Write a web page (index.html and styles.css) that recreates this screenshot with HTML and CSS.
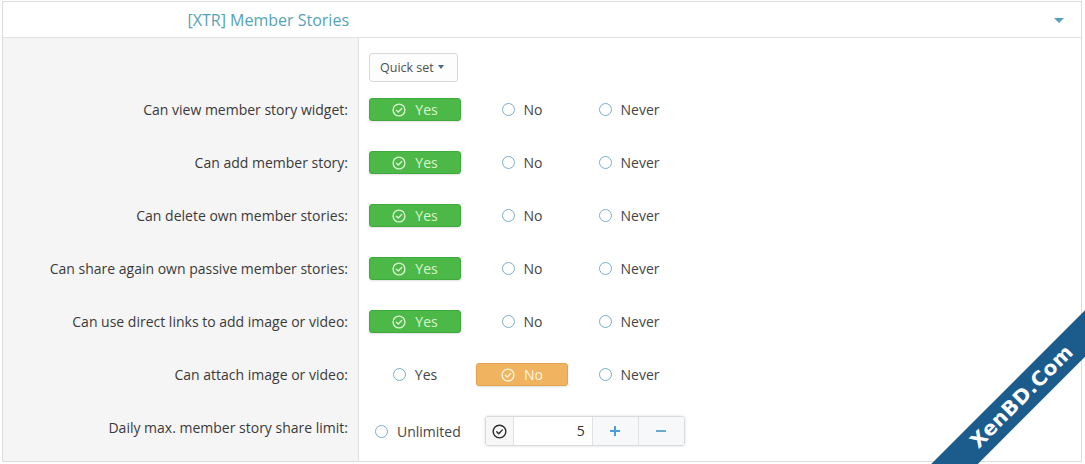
FILE: index.html
```html
<!DOCTYPE html>
<html>
<head>
<meta charset="utf-8">
<link rel="stylesheet" href="styles.css">
</head>
<body>
<div class="page">
  <div class="block">
    <div class="block-header">
      <div class="block-title">[XTR] Member Stories</div>
      <div class="block-toggle"><span class="caret-lg"></span></div>
    </div>
    <div class="block-body">
      <div class="row row-first">
        <div class="label"></div>
        <div class="ctrl">
          <button class="quickset">Quick set <span class="caret-sm"></span></button>
        </div>
      </div>

      <div class="row">
        <div class="label">Can view member story widget:</div>
        <div class="ctrl"><div class="opts">
          <div class="opt opt-yes"><svg class="chk" viewBox="0 0 14 14"><circle cx="7" cy="7" r="5.9"/><path d="M4.4 7.2l1.9 1.9 3.4-3.6"/></svg>Yes</div>
          <div class="opt"><span class="radio"></span>No</div>
          <div class="opt"><span class="radio"></span>Never</div>
        </div></div>
      </div>

      <div class="row">
        <div class="label">Can add member story:</div>
        <div class="ctrl"><div class="opts">
          <div class="opt opt-yes"><svg class="chk" viewBox="0 0 14 14"><circle cx="7" cy="7" r="5.9"/><path d="M4.4 7.2l1.9 1.9 3.4-3.6"/></svg>Yes</div>
          <div class="opt"><span class="radio"></span>No</div>
          <div class="opt"><span class="radio"></span>Never</div>
        </div></div>
      </div>

      <div class="row">
        <div class="label">Can delete own member stories:</div>
        <div class="ctrl"><div class="opts">
          <div class="opt opt-yes"><svg class="chk" viewBox="0 0 14 14"><circle cx="7" cy="7" r="5.9"/><path d="M4.4 7.2l1.9 1.9 3.4-3.6"/></svg>Yes</div>
          <div class="opt"><span class="radio"></span>No</div>
          <div class="opt"><span class="radio"></span>Never</div>
        </div></div>
      </div>

      <div class="row">
        <div class="label">Can share again own passive member stories:</div>
        <div class="ctrl"><div class="opts">
          <div class="opt opt-yes"><svg class="chk" viewBox="0 0 14 14"><circle cx="7" cy="7" r="5.9"/><path d="M4.4 7.2l1.9 1.9 3.4-3.6"/></svg>Yes</div>
          <div class="opt"><span class="radio"></span>No</div>
          <div class="opt"><span class="radio"></span>Never</div>
        </div></div>
      </div>

      <div class="row">
        <div class="label">Can use direct links to add image or video:</div>
        <div class="ctrl"><div class="opts">
          <div class="opt opt-yes"><svg class="chk" viewBox="0 0 14 14"><circle cx="7" cy="7" r="5.9"/><path d="M4.4 7.2l1.9 1.9 3.4-3.6"/></svg>Yes</div>
          <div class="opt"><span class="radio"></span>No</div>
          <div class="opt"><span class="radio"></span>Never</div>
        </div></div>
      </div>

      <div class="row">
        <div class="label">Can attach image or video:</div>
        <div class="ctrl"><div class="opts">
          <div class="opt"><span class="radio"></span>Yes</div>
          <div class="opt opt-no"><svg class="chk" viewBox="0 0 14 14"><circle cx="7" cy="7" r="5.9"/><path d="M4.4 7.2l1.9 1.9 3.4-3.6"/></svg>No</div>
          <div class="opt"><span class="radio"></span>Never</div>
        </div></div>
      </div>

      <div class="row row-last">
        <div class="label">Daily max. member story share limit:</div>
        <div class="ctrl ctrl-limit">
          <div class="unlimited"><span class="radio"></span>Unlimited</div>
          <div class="numgroup">
            <div class="ng-check"><svg class="chk-dark" viewBox="0 0 14 14"><circle cx="7" cy="7" r="5.9"/><path d="M4.4 7.2l1.9 1.9 3.4-3.6"/></svg></div>
            <div class="ng-input">5</div>
            <div class="ng-btn ng-plus">
              <svg viewBox="0 0 12 12"><path d="M6 1v10M1 6h10"/></svg>
            </div>
            <div class="ng-btn ng-minus">
              <svg viewBox="0 0 12 12"><path d="M1 6h10"/></svg>
            </div>
          </div>
        </div>
      </div>
    </div>
  </div>
  <div class="ribbon">XenBD.Com</div>
</div>
</body>
</html>
```

FILE: styles.css
```css
html, body {
  margin: 0;
  padding: 0;
  overflow: hidden;
  background: #fff;
}
.page {
  position: relative;
  width: 1085px;
  height: 464px;
  overflow: hidden;
  font-family: "Open Sans", "Noto Sans", sans-serif;
  color: #3c3c3c;
}
.block {
  margin: 1px 3px 0 2px;
  border: 1px solid #dcdcdc;
  background: #fff;
}
.block-header {
  display: grid;
  grid-template-columns: 356px 1fr;
  height: 35px;
  border-bottom: 1px solid #e2e2e2;
  align-items: center;
}
.block-title {
  text-align: right;
  padding-right: 10px;
  font-size: 16px;
  color: #55a3b7;
  line-height: 20px;
}
.block-toggle {
  display: flex;
  justify-content: flex-end;
  padding-right: 17px;
}
.caret-lg {
  width: 0;
  height: 0;
  border-left: 5px solid transparent;
  border-right: 5px solid transparent;
  border-top: 5px solid #4fa3bb;
  margin-top: 2px;
}
.block-body {
  display: flex;
  flex-direction: column;
}
.row {
  display: grid;
  grid-template-columns: 356px 1fr;
}
.label {
  background: #f5f5f5;
  border-right: 1px solid #e2e2e2;
  text-align: right;
  padding: 15px 10px 15px 0;
  font-size: 14px;
  line-height: 23px;
  color: #3a3a3a;
}
.ctrl {
  padding: 15px 10px 15px 10px;
}
.row-first .label,
.row-first .ctrl {
  padding-bottom: 1px;
}
.quickset {
  display: flex;
  align-items: center;
  height: 29px;
  width: 89px;
  padding: 0 0 0 10px;
  background: #fdfdfd;
  border: 1px solid #d8d8d8;
  border-radius: 3px;
  font-family: "Open Sans", "Noto Sans", sans-serif;
  font-size: 12.5px;
  color: #505050;
  gap: 4px;
}
.caret-sm {
  width: 0;
  height: 0;
  border-left: 3.5px solid transparent;
  border-right: 3.5px solid transparent;
  border-top: 4px solid #3f6c8f;
  margin-top: -1px;
}
.opts {
  display: grid;
  grid-template-columns: 92px 92px 92px;
  column-gap: 15px;
}
.opt {
  height: 23px;
  box-sizing: border-box;
  display: flex;
  align-items: center;
  justify-content: center;
  font-size: 14px;
  color: #454545;
}
.radio {
  width: 11px;
  height: 11px;
  border: 1.5px solid #7aaec5;
  border-radius: 50%;
  background: #fff;
  margin-right: 9px;
  flex: none;
}
.opt-yes, .opt-no {
  border-radius: 3px;
  box-shadow: 0 1px 2px rgba(0,0,0,0.12);
}
.opt-yes {
  background: #4cb848;
  border: 1px solid #3faa3c;
  color: #d9f6cf;
}
.opt-no {
  background: #f0b461;
  border: 1px solid #e3a44f;
  color: #fff4dd;
}
.chk {
  width: 14px;
  height: 14px;
  margin-right: 9px;
  fill: none;
  stroke: currentColor;
  stroke-width: 1.4;
  stroke-linecap: round;
  stroke-linejoin: round;
}
.ctrl-limit {
  display: flex;
  align-items: flex-start;
}
.unlimited {
  display: flex;
  align-items: center;
  height: 30px;
  padding-left: 6px;
  font-size: 14px;
  color: #454545;
}
.unlimited .radio {
  margin-right: 9px;
}
.numgroup {
  display: flex;
  margin-left: 24px;
  height: 30px;
  box-sizing: border-box;
  border: 1px solid #dadada;
  border-radius: 3px;
  box-shadow: 0 0 3px rgba(0,0,0,0.14);
  overflow: hidden;
}
.ng-check {
  width: 27px;
  display: flex;
  align-items: center;
  justify-content: center;
  background: #f7f7f7;
  border-right: 1px solid #e2e2e2;
}
.chk-dark {
  width: 15px;
  height: 15px;
  fill: none;
  stroke: #2b2b2b;
  stroke-width: 1.3;
  stroke-linecap: round;
  stroke-linejoin: round;
}
.ng-input {
  width: 71px;
  padding-right: 7px;
  background: #fff;
  text-align: right;
  font-size: 14px;
  line-height: 28px;
  color: #333;
}
.ng-btn {
  width: 45px;
  display: flex;
  align-items: center;
  justify-content: center;
  background: #f7f8f9;
  border-left: 1px solid #e2e2e2;
}
.ng-btn svg {
  width: 12px;
  height: 12px;
  fill: none;
  stroke: #4a9fd8;
  stroke-width: 2;
}
.ng-minus svg {
  stroke: #6aa9cf;
}
.ribbon {
  position: absolute;
  left: 822px;
  top: 380px;
  width: 400px;
  height: 33px;
  transform: rotate(-45deg);
  background: #1b5c8c;
  color: #fff;
  font-family: "DejaVu Sans", sans-serif;
  font-weight: bold;
  font-size: 20px;
  line-height: 33px;
  text-align: center;
  letter-spacing: 0.5px;
}
```
